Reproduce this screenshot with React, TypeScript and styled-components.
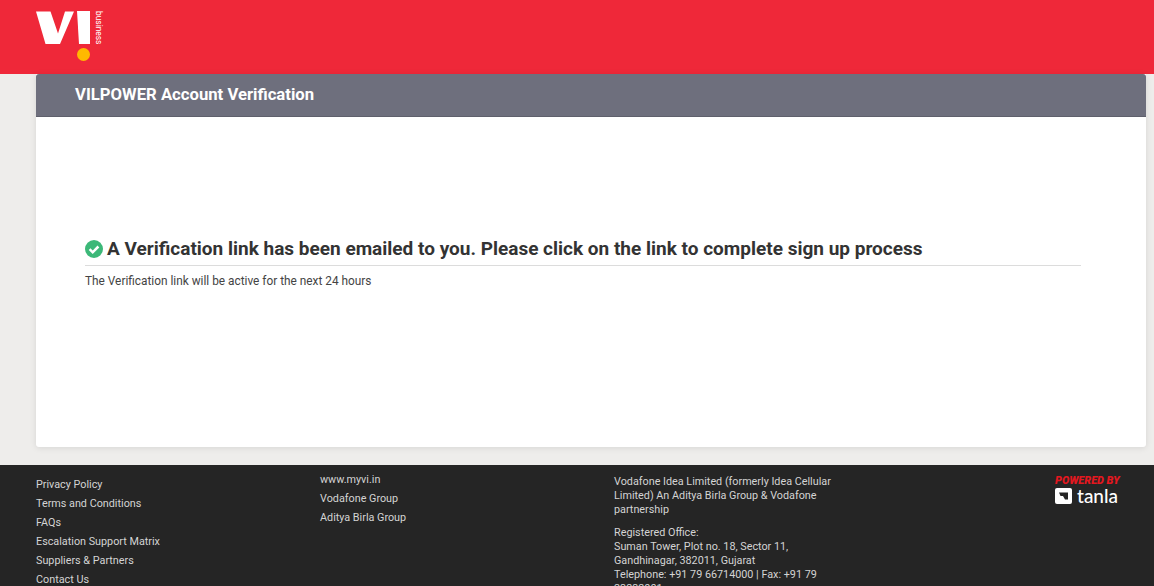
import * as React from 'react'

import styled, { createGlobalStyle } from 'styled-components'

const GlobalStyle = createGlobalStyle`
  html, body {
    margin: 0;
    height: 100%;
    overflow: hidden;
    background: #eeedeb;
    font-family: Roboto, 'Liberation Sans', sans-serif;
  }
`

const Header = styled.header`
  height: 74px;
  background: #ef2839;
  padding: 10px 0 0 36px;
  box-sizing: border-box;
  display: flex;
  align-items: flex-start;
`

const LogoWrap = styled.div`
  display: flex;
  align-items: flex-start;
  gap: 3px;
`

const BusinessLabel = styled.span`
  writing-mode: vertical-rl;
  color: #fff;
  font-size: 8.4px;
  line-height: 8px;
  margin-top: 1px;
`

const Main = styled.main`
  padding: 0 8px 18px 36px;
`

const Card = styled.section`
  height: 373px;
  background: #fff;
  border-radius: 0 0 3px 3px;
  box-shadow: 0 1px 6px rgba(0, 0, 0, 0.1);
  display: flex;
  flex-direction: column;
`

const CardHeader = styled.div`
  height: 43px;
  box-sizing: border-box;
  padding: 0 0 2px 39px;
  display: flex;
  align-items: center;
  background: #6e6f7d;
  border-bottom: 1px solid #5f606c;
  border-radius: 3px 3px 0 0;
  color: #fff;
  font-size: 16.7px;
  font-weight: 700;
`

const CardBody = styled.div`
  padding: 120px 65px 0 49px;
`

const Heading = styled.h2`
  margin: 0;
  padding-bottom: 4px;
  border-bottom: 1px solid #dcdcdc;
  display: flex;
  align-items: center;
  gap: 4px;
  color: #333;
  font-size: 19px;
  line-height: 24px;
  font-weight: 700;
  white-space: nowrap;
`

const Note = styled.p`
  margin: 7px 0 0;
  color: #444;
  font-size: 11.85px;
  line-height: 16px;
`

const Footer = styled.footer`
  height: 121px;
  overflow: hidden;
  background: #252525;
  color: #d4d4d4;
  font-size: 10.8px;
  display: flex;
`

const FooterColumn = styled.div<{ $width: number; $top: number; $left?: number }>`
  width: ${p => p.$width}px;
  padding-top: ${p => p.$top}px;
  padding-left: ${p => p.$left ?? 0}px;
  flex: none;
  box-sizing: border-box;
`

const FooterLink = styled.div`
  height: 19px;
  line-height: 19px;
  white-space: nowrap;
`

const LegalText = styled.p`
  width: 226px;
  margin: 0 0 9px;
  line-height: 14px;
`

const Powered = styled.div`
  display: flex;
  flex-direction: column;
  align-items: flex-start;
  padding-top: 9px;
`

const PoweredLabel = styled.span`
  color: #e3171f;
  font-size: 10.9px;
  line-height: 13px;
  font-weight: 900;
  font-style: italic;
  white-space: nowrap;
`

const TanlaRow = styled.div`
  display: flex;
  align-items: center;
  gap: 5px;
  color: #fff;
  font-family: Lato, Roboto, sans-serif;
  font-size: 19px;
  line-height: 18px;
  font-weight: 500;
`

const CheckIcon = () => (
  <svg width="18" height="18" viewBox="0 0 18 18">
    <circle cx="9" cy="9" r="9" fill="#3cb878" />
    <path d="M4.6 9.2l3.1 3.1 5.7-5.8" fill="none" stroke="#fff" strokeWidth="2.5" />
  </svg>
)

const ViLogo = () => (
  <svg width="56" height="52" viewBox="0 0 56 52">
    <path d="M0 1.5h14.5l7.5 22 7-22h9l-14 32.5H9.500z" fill="#fff" />
    <path d="M41 1h13v33H43z" fill="#fff" />
    <circle cx="47.500" cy="44.500" r="6.500" fill="#ffb900" />
  </svg>
)

const TanlaMark = () => (
  <svg width="17" height="16" viewBox="0 0 17 16">
    <rect width="17" height="16" rx="2" fill="#fff" />
    <path d="M4 4.500h9v7h-3L8 8H5.500z" fill="#252525" />
  </svg>
)

export default function App() {
  return (
    <>
      <GlobalStyle />
      <Header>
        <LogoWrap>
          <ViLogo />
          <BusinessLabel>business</BusinessLabel>
        </LogoWrap>
      </Header>
      <Main>
        <Card>
          <CardHeader>VILPOWER Account Verification</CardHeader>
          <CardBody>
            <Heading>
              <CheckIcon />
              A Verification link has been emailed to you. Please click on the link to complete sign up process
            </Heading>
            <Note>The Verification link will be active for the next 24 hours</Note>
          </CardBody>
        </Card>
      </Main>
      <Footer>
        <FooterColumn $width={320} $top={10} $left={36}>
          <FooterLink>Privacy Policy</FooterLink>
          <FooterLink>Terms and Conditions</FooterLink>
          <FooterLink>FAQs</FooterLink>
          <FooterLink>Escalation Support Matrix</FooterLink>
          <FooterLink>Suppliers &amp; Partners</FooterLink>
          <FooterLink>Contact Us</FooterLink>
        </FooterColumn>
        <FooterColumn $width={294} $top={5}>
          <FooterLink>www.myvi.in</FooterLink>
          <FooterLink>Vodafone Group</FooterLink>
          <FooterLink>Aditya Birla Group</FooterLink>
        </FooterColumn>
        <FooterColumn $width={441} $top={10}>
          <LegalText>Vodafone Idea Limited (formerly Idea Cellular Limited) An Aditya Birla Group &amp; Vodafone partnership</LegalText>
          <LegalText>
            Registered Office:
            <br />
            Suman Tower, Plot no. 18, Sector 11, Gandhinagar, 382011, Gujarat
            <br />
            Telephone: +91 79 66714000 | Fax: +91 79 23232001
          </LegalText>
        </FooterColumn>
        <Powered>
          <PoweredLabel>POWERED BY</PoweredLabel>
          <TanlaRow>
            <TanlaMark />
            tanla
          </TanlaRow>
        </Powered>
      </Footer>
    </>
  )
}
